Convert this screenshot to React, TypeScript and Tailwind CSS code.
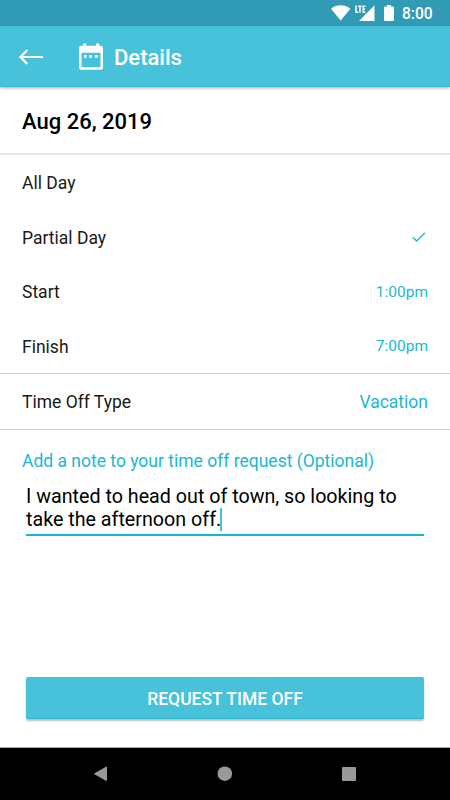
import type { ReactNode } from "react";

function StatusBar() {
  return (
    <div className="flex h-[26px] items-center bg-[#319ab4] pr-[17px] text-white">
      <svg className="ml-auto h-[26px] w-[74px] shrink-0" viewBox="0 0 74 26" fill="currentColor">
        <path d="M2 8.800C7.500 4.200 15.900 4.200 21.400 8.800L11.700 20.600Z" />
        <path d="M45.500 5.300V21H30Z" />
        <path d="M27 5.500v6.700h2.300M29.200 6.200h3.600M31 6.200v6.500M36.400 6.200h-2.200v6h2.200M34.200 9.200h2" fill="none" stroke="currentColor" strokeWidth="1.500" />
        <path d="M58 5h4v1.600h2q1 0 1 1V20q0 1-1 1h-8q-1 0-1-1V7.600q0-1 1-1h2z" />
      </svg>
      <span className="ml-[-1px] w-[31px] whitespace-nowrap pt-[3px] text-[15.600px] leading-none font-medium">8:00</span>
    </div>
  );
}

function Header() {
  return (
    <header className="z-10 flex h-[61px] items-center border-b border-[#35bdd5] bg-[#48c1db] pt-px text-white shadow-[0_1px_3px_rgba(0,0,0,0.35)]">
      <svg className="ml-[18px] h-[18px] w-[26px]" viewBox="0 0 26 18" fill="none" stroke="currentColor" strokeWidth="2.200">
        <path d="M25 9H2.500M9.300 2L2.400 9L9.300 16" />
      </svg>
      <svg className="ml-[34px] h-[28px] w-[26px]" viewBox="0 0 26 28" fill="currentColor" fillRule="evenodd">
        <path d="M5.200 0.500h3v2.300h10V0.500h3v2.300h1.300q2.500 0 2.500 2.500v18.900q0 2.500-2.500 2.500h-19q-2.500 0-2.500-2.500V5.300q0-2.500 2.500-2.500H5.200zM3.500 9.800v14.400h19v-14.400zM6 12h2.700v2.700H6zM11.300 12H14v2.700h-2.700zM16.900 12h2.700v2.700h-2.700z" />
      </svg>
      <h1 className="ml-[10px] pt-[3px] text-[22px] leading-none font-medium whitespace-nowrap">Details</h1>
    </header>
  );
}

function Row({ label, children }: { label: string; children?: ReactNode }) {
  return (
    <div className="flex h-[54.600px] items-center justify-between">
      <span className="text-[17.500px] whitespace-nowrap">{label}</span>
      {children}
    </div>
  );
}

export default function App() {
  return (
    <div className="flex h-[800px] w-[450px] flex-col overflow-hidden bg-white font-[Roboto,sans-serif] text-[#191919]">
      <StatusBar />
      <Header />
      <section className="flex h-[68px] items-center border-b-2 border-[#e6e6e6] px-[22px] pt-[3px]">
        <h2 className="text-[22px] font-medium whitespace-nowrap text-black">Aug 26, 2019</h2>
      </section>
      <section className="h-[219px] border-b border-[#d4d4d4] px-[22px] pt-px">
        <Row label="All Day" />
        <Row label="Partial Day">
          <svg className="mr-px h-3 w-4" viewBox="0 0 16 12" fill="none" stroke="#1bb7d2" strokeWidth="1.400">
            <path d="M1.800 5.300L5.600 9L13.800 0.900" />
          </svg>
        </Row>
        <Row label="Start"><span className="text-[15.500px] text-[#1bb7d2]">1:00pm</span></Row>
        <Row label="Finish"><span className="text-[15.500px] text-[#1bb7d2]">7:00pm</span></Row>
      </section>
      <section className="flex h-[56px] items-center justify-between border-b border-[#d4d4d4] px-[22px] pt-[2px] text-[17.500px]">
        <span>Time Off Type</span>
        <span className="text-[#1bb7d2]">Vacation</span>
      </section>
      <section className="px-[22px] pt-[20px]">
        <label className="block h-[22px] text-[17.500px] leading-[22px] whitespace-nowrap text-[#1bb7d2]">Add a note to your time off request (Optional)</label>
        <div className="mx-1 mt-[13px] h-[51px] border-b-2 border-[#10bad5] text-[19.700px] leading-[23px] whitespace-nowrap text-black">
          <p>I wanted to head out of town, so looking to</p>
          <p className="flex">take the afternoon off.<span className="ml-[-1px] h-[23px] w-[2px] bg-[#48c1db]" /></p>
        </div>
      </section>
      <button className="mx-[26px] mt-auto mb-[28px] h-[42px] shrink-0 rounded-[2px] border-b border-[#28bad3] bg-[#48c1db] pt-[4px] text-[17.500px] leading-none font-medium text-white shadow-[0_2px_2px_rgba(40,30,60,0.3)]">REQUEST TIME OFF</button>
      <nav className="flex h-[53px] shrink-0 border-t border-[#aaa] bg-black">
        <svg className="h-[52px] w-[450px]" viewBox="0 0 450 52" fill="#999">
          <path d="M94.500 25.800L106.500 19V32.600Z" stroke="#999" strokeWidth="1" strokeLinejoin="round" />
          <circle cx="224.800" cy="25.700" r="7.300" />
          <rect x="342" y="19" width="14" height="14" rx="0.700" />
        </svg>
      </nav>
    </div>
  );
}
